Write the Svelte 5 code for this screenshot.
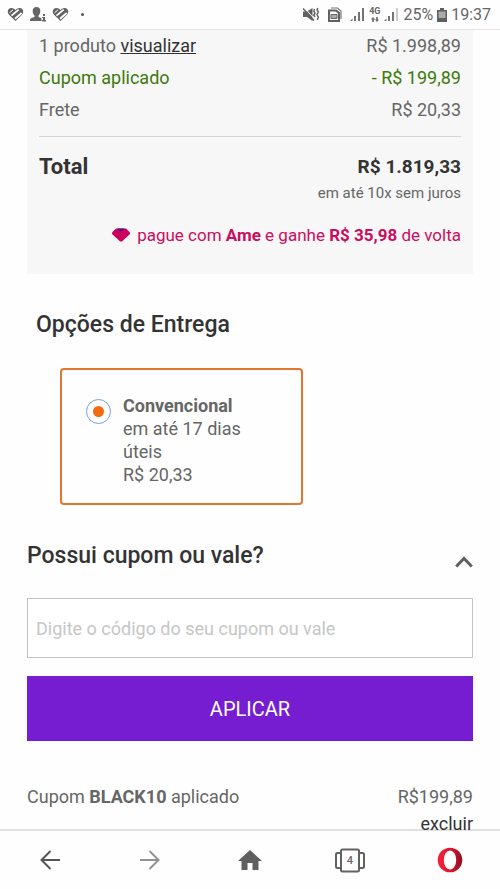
<script lang="ts">
	let coupon = $state('');
	let shipping = $state('convencional');
	let couponOpen = $state(true);

	const lines = [
		{ label: 'Cupom aplicado', value: '- R$ 199,89', discount: true },
		{ label: 'Frete', value: 'R$ 20,33', discount: false }
	];
</script>

{#snippet heart()}
	<svg width="17" height="15" viewBox="0 0 17 15">
		<path d="M8.500 14 L2 7.800 C-.5 4.800 1 1 4.500 1 C6.500 1 7.700 2 8.500 3.200 C9.300 2 10.500 1 12.500 1 C16 1 17.500 4.800 15 7.800 Z" fill="#626262" />
		<path d="M4.500 8.600 L11.700 2.600 M8 11.800 L14.700 6" stroke="#fff" stroke-width="1.800" />
		<path d="M2.500 5.800 L6 2.900" stroke="#fff" stroke-width="1" />
	</svg>
{/snippet}

{#snippet signal(faded: boolean)}
	<svg width="15" height="15" viewBox="0 0 15 15" fill="#747474">
		<path d="M0 14 L2.500 11.500 V14 Z" />
		<rect x="4" y="9" width="2" height="5" />
		<rect x="8" y="5" width="2" height="9" />
		<rect x="12" y="1" width="2" height="13" fill={faded ? '#ccc' : '#747474'} />
	</svg>
{/snippet}

<div class="screen">
	<header class="status">
		<div class="notifications">
			{@render heart()}
			<svg width="16" height="15" viewBox="0 0 16 15" fill="#666">
				<path d="M6.500 0 C9.300 0 10.500 2 10.300 4.500 C10.200 6.500 9.300 7.600 8.600 8.500 V10 L11.500 11.300 V14 H0 V12.500 C0 11.200 2.500 10.800 4.500 10 V8.500 C3.600 7.600 2.800 6.500 2.700 4.500 C2.500 2 3.700 0 6.500 0 Z" />
				<path d="M13 7 H15 V9 H13 Z M12 10 H15 V13 H16 V14.500 H12 V13 H13 V11 H12 Z" />
			</svg>
			{@render heart()}
			<span class="dot"></span>
		</div>
		<div class="system">
			<svg width="17" height="15" viewBox="0 0 17 15">
				<path d="M0 4.500 H4 L9.500 1 V14 L4 10 H0 Z" fill="#606060" />
				<path d="M1.500 1 L11.500 12" stroke="#fff" stroke-width="1" />
				<path d="M0 1.500 L11 13.500" stroke="#606060" stroke-width="1.500" />
				<path d="M11.500 2 L10.800 4 L12 6 L10.800 8 L12 10 M14.800 1 L14 3 L15.300 5 L14 7.500 L15.300 10 L14.300 13" fill="none" stroke="#666" stroke-width="1.500" />
			</svg>
			<svg class="sim" width="14" height="15" viewBox="0 0 14 15">
				<path d="M3 1 H9.500 L13 4 V12" fill="none" stroke="#777" stroke-width="1.200" />
				<path d="M1 3.500 H8 L11 6 V14 H1 Z" fill="#fff" stroke="#606060" stroke-width="2" />
				<path d="M3 7.500 H9 V11.500 H3 Z" fill="#aaa" stroke="#666" stroke-width="1" />
			</svg>
			{@render signal(false)}
			<span class="network">
				<b>4G</b>
				<svg width="8" height="5" viewBox="0 0 8 5" fill="#666">
					<path d="M0 2.500 L2 0 L4 2.500 H2.800 V5 H1.200 V2.500 Z M4 2.500 H5.200 V0 H6.800 V2.500 H8 L6 5 Z" />
				</svg>
			</span>
			{@render signal(true)}
			<span>25%</span>
			<svg width="10" height="14" viewBox="0 0 10 14">
				<path d="M3 0 H7 V2 H10 V14 H0 V2 H3 Z" fill="#5f5f5f" />
				<path d="M1.500 3.500 H8.500 V10 H1.500 Z" fill="#aaa" />
			</svg>
			<span>19:37</span>
		</div>
	</header>

	<main>
		<section class="summary">
			<div class="row">
				<span>1 produto <a href="#produtos">visualizar</a></span>
				<span>R$ 1.998,89</span>
			</div>
			{#each lines as line}
				<div class="row" class:discount={line.discount}>
					<span>{line.label}</span>
					<span>{line.value}</span>
				</div>
			{/each}
			<div class="row total">
				<strong>Total</strong>
				<strong class="amount">R$ 1.819,33</strong>
			</div>
			<p class="installments">em até 10x sem juros</p>
			<p class="cashback">
				<svg width="18" height="14" viewBox="0 0 18 14">
					<path d="M4 .5 H14 L18 4.500 V6 L10.500 13 Q9 14 7.500 13 L0 6 V4.500 Z" fill="#cb005c" />
					<path d="M5.500 .5 H12.500 L10 3 Q9 3.800 8 3 Z" fill="#3b1686" />
				</svg>
				<span>pague com <b>Ame</b> e ganhe <b>R$ 35,98</b> de volta</span>
			</p>
		</section>

		<section class="delivery">
			<h2>Opções de Entrega</h2>
			<label class="option">
				<input type="radio" name="shipping" value="convencional" bind:group={shipping} />
				<span>
					<b>Convencional</b><br />
					em até 17 dias úteis<br />
					R$ 20,33
				</span>
			</label>
		</section>

		<section class="coupon">
			<div class="coupon-title">
				<h2>Possui cupom ou vale?</h2>
				<button class="toggle" aria-label="Mostrar ou ocultar cupom" onclick={() => (couponOpen = !couponOpen)}>
					<svg width="18" height="12" viewBox="0 0 18 12" fill="none" stroke="#606060" stroke-width="3">
						<path d="M1.200 10.500 L9 2.500 L16.800 10.500" />
					</svg>
				</button>
			</div>
			{#if couponOpen}
				<input class="code" type="text" aria-label="Código do cupom" placeholder="Digite o código do seu cupom ou vale" bind:value={coupon} />
				<button class="apply">APLICAR</button>
			{/if}
			<div class="applied">
				<span>Cupom <b>BLACK10</b> aplicado</span>
				<span>R$199,89</span>
			</div>
			<button class="remove">excluir</button>
		</section>
	</main>

	<nav>
		<button aria-label="Voltar">
			<svg width="20" height="20" viewBox="0 0 20 20" fill="none" stroke="#555" stroke-width="2">
				<path d="M20 10 H2 M10.500 1 L1.500 10 L10.500 19" />
			</svg>
		</button>
		<button aria-label="Avançar">
			<svg width="20" height="20" viewBox="0 0 20 20" fill="none" stroke="#929292" stroke-width="2">
				<path d="M0 10 H18 M9.500 1 L18.500 10 L9.500 19" />
			</svg>
		</button>
		<button aria-label="Início">
			<svg width="24" height="20" viewBox="0 0 24 20" fill="#5f5f5f">
				<path d="M12 0 L24 11 H20.500 V20 H14.500 V13 H9.500 V20 H3.500 V11 H0 Z" />
			</svg>
		</button>
		<button class="tabs" aria-label="4 abas">
			<svg width="30" height="25" viewBox="0 0 30 25" fill="none" stroke="#626262" stroke-width="2">
				<rect x="6" y="1.500" width="18" height="22" rx="1.500" />
				<path d="M6 5 H2.500 Q1 5 1 6.500 V18.500 Q1 20 2.500 20 H6 M24 5 H27.500 Q29 5 29 6.500 V18.500 Q29 20 27.500 20 H24" />
			</svg>
			<span>4</span>
		</button>
		<button aria-label="Opera">
			<svg width="26" height="26" viewBox="0 0 26 26">
				<defs>
					<linearGradient id="opera" x1="0" x2="1" y1="0" y2="0">
						<stop offset="0" stop-color="#f52236" />
						<stop offset=".5" stop-color="#dc1830" />
						<stop offset="1" stop-color="#920d20" />
					</linearGradient>
				</defs>
				<circle cx="13" cy="13" r="12.300" fill="url(#opera)" />
				<ellipse cx="13" cy="13" rx="6.200" ry="9.500" fill="#fff" />
			</svg>
		</button>
	</nav>
</div>

<style>
	:global(body) {
		margin: 0;
		background: #fefefe;
	}

	.screen {
		min-height: 100vh;
		display: flex;
		flex-direction: column;
		font-family: Roboto, sans-serif;
		font-size: 18px;
		color: #666;
	}

	button {
		padding: 0;
		border: 0;
		background: none;
		font: inherit;
		color: inherit;
		cursor: pointer;
	}

	h2,
	p {
		margin: 0;
	}

	svg {
		display: block;
		flex: none;
	}

	.status {
		flex: none;
		height: 30px;
		box-sizing: border-box;
		padding: 0 9px 0 7px;
		border-bottom: 1px solid #e6e6e6;
		display: flex;
		align-items: center;
		justify-content: space-between;
		font-size: 16px;
	}

	.notifications,
	.system {
		display: flex;
		align-items: center;
		gap: 6px;
	}

	.system {
		gap: 4px;
	}

	.sim {
		margin: 0 4px;
	}

	.dot {
		width: 3px;
		height: 3px;
		margin-left: 6px;
		border-radius: 50%;
		background: #555;
	}

	.network {
		display: flex;
		flex-direction: column;
		align-items: center;
		gap: 1px;
		font-size: 9px;
		line-height: 9px;
	}

	main {
		flex: 1;
		z-index: 1;
		padding: 0 27px;
	}

	.summary {
		padding: 0 12px 27px;
		background: #f7f7f7;
	}

	.row {
		display: flex;
		justify-content: space-between;
		line-height: 32px;
	}

	.row a {
		color: #333;
	}

	.discount {
		color: #3c7a0c;
	}

	.total {
		margin-top: 10px;
		padding-top: 14px;
		border-top: 1px solid #d6d6d6;
		font-size: 22px;
		color: #333;
	}

	.amount {
		font-size: 19px;
	}

	.installments {
		font-size: 15px;
		line-height: 20px;
		text-align: right;
	}

	.cashback {
		margin-top: 20px;
		display: flex;
		align-items: center;
		justify-content: flex-end;
		gap: 7px;
		font-size: 17px;
		line-height: 24px;
		color: #cb0c60;
	}

	h2 {
		font-size: 23px;
		font-weight: 500;
		line-height: 32px;
		color: #333;
	}

	.delivery {
		padding: 35px 9px;
	}

	.option {
		margin: 27px 24px 0;
		max-width: 243px;
		box-sizing: border-box;
		padding: 24px 24px 17px;
		border: 2px solid #e27631;
		border-radius: 4px;
		display: flex;
		align-items: flex-start;
		gap: 12px;
		line-height: 23px;
	}

	.option input {
		appearance: none;
		flex: none;
		width: 25px;
		height: 25px;
		margin: 5px 0 0;
		border: 1px solid #7c9fd9;
		border-radius: 50%;
		display: grid;
		place-items: center;
	}

	.option input:checked::before {
		content: '';
		width: 11px;
		height: 11px;
		border-radius: 50%;
		background: #f26a11;
	}

	.coupon-title {
		display: flex;
		justify-content: space-between;
		align-items: center;
	}

	.toggle {
		padding-top: 12px;
	}

	.code {
		display: block;
		width: 100%;
		height: 60px;
		box-sizing: border-box;
		margin-top: 26px;
		padding: 0 8px;
		border: 1px solid #c4c4c4;
		border-radius: 0;
		background: #fff;
		font: inherit;
		color: #333;
	}

	.code::placeholder {
		color: #c6c6c6;
	}

	.apply {
		display: block;
		width: 100%;
		height: 65px;
		margin-top: 18px;
		background: #771dd1;
		color: #fff;
		font-size: 20px;
	}

	.applied {
		margin-top: 42px;
		display: flex;
		justify-content: space-between;
		line-height: 28px;
	}

	.remove {
		display: block;
		margin: 4px 0 0 auto;
		line-height: 18px;
		color: #333;
	}

	/* the last line of the page runs over the toolbar's edge */
	nav {
		flex: none;
		height: 60px;
		box-sizing: border-box;
		margin-top: -4px;
		border-top: 2px solid #e0e0e0;
		display: grid;
		grid-template-columns: repeat(5, 1fr);
	}

	nav button {
		display: grid;
		place-items: center;
	}

	.tabs > * {
		grid-area: 1 / 1;
	}

	.tabs span {
		font-size: 11px;
		font-weight: 500;
	}
</style>
